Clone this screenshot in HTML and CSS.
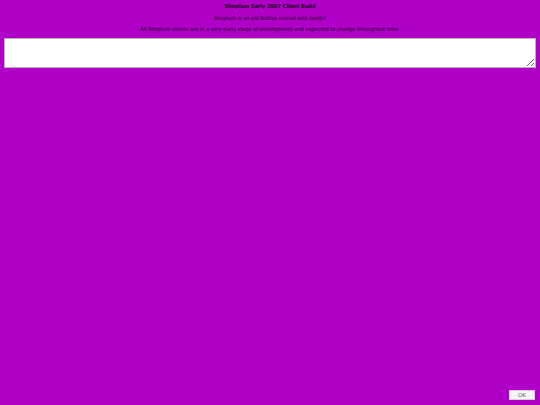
FILE: index.html
```html
<!DOCTYPE html>
<html>
<head>
<meta charset="utf-8">
<link rel="stylesheet" href="styles.css">
</head>
<body>
<div class="page">
  <div class="title">Shoplum Early 2007 Client Build</div>
  <div class="line">Shoplum is an old Roblox revival with twists!</div>
  <div class="line">All Shoplum clients are in a very early stage of development and expected to change throughout time.</div>
  <textarea class="box"></textarea>
  <div class="spacer"></div>
  <div class="footer"><button class="ok">OK</button></div>
</div>
</body>
</html>
```
FILE: styles.css
```css
html, body {
  margin: 0;
  padding: 0;
  height: 100%;
  background: #b000c8;
}
.page {
  display: flex;
  flex-direction: column;
  align-items: center;
  height: 405px;
  box-sizing: border-box;
  padding: 3px 4px 5px 4px;
  font-family: "DejaVu Sans Condensed", "DejaVu Sans", sans-serif;
  font-stretch: condensed;
  color: #1a0020;
}
.title {
  font-size: 5.6px;
  font-weight: bold;
  line-height: 7px;
}
.line {
  font-size: 5.6px;
  line-height: 7px;
  margin-top: 4.5px;
}
.box {
  margin-top: 5px;
  width: 100%;
  height: 30px;
  box-sizing: border-box;
  border: 1px solid #b4b4b4;
  background: #ffffff;
  resize: both;
  padding: 0;
}
.spacer {
  flex: 1;
}
.footer {
  align-self: stretch;
  display: flex;
  justify-content: flex-end;
}
.ok {
  width: 26px;
  height: 10px;
  padding: 0;
  margin-right: 1px;
  font-family: "DejaVu Sans", sans-serif;
  font-size: 5.5px;
  line-height: 8px;
  color: #555;
  background: #f4f4f4;
  border: 1px solid #d0d0d0;
  border-radius: 0;
}
```
